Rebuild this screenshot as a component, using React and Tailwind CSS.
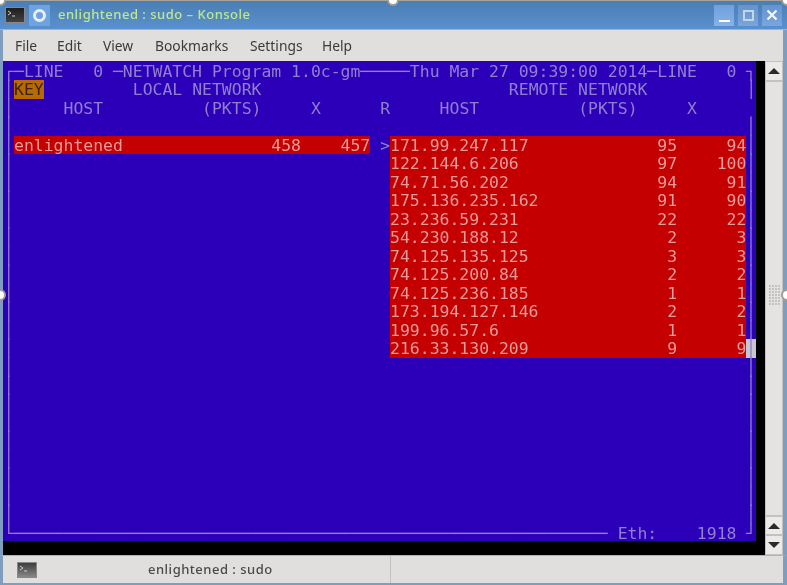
const mono = { fontFamily: '"DejaVu Sans Mono", monospace' };

const remote = [
  ["171.99.247.117", "95", "94"],
  ["122.144.6.206", "97", "100"],
  ["74.71.56.202", "94", "91"],
  ["175.136.235.162", "91", "90"],
  ["23.236.59.231", "22", "22"],
  ["54.230.188.12", "2", "3"],
  ["74.125.135.125", "3", "3"],
  ["74.125.200.84", "2", "2"],
  ["74.125.236.185", "1", "1"],
  ["173.194.127.146", "2", "2"],
  ["199.96.57.6", "1", "1"],
  ["216.33.130.209", "9", "9"],
];

function pad(n) { return " ".repeat(n); }

// One terminal row, written as text with the terminal's real 76 column grid.
function Line({ cells }) {
  let cursor = 0;
  const out = [];
  cells.forEach(([col, text, cls], i) => {
    if (col > cursor) out.push(pad(col - cursor));
    cursor = col + [...text].length;
    out.push(cls ? <span key={i} className={"inline-block h-[18.47px] align-top " + cls}>{text}</span> : text);
  });
  return <div className="h-[18.47px] leading-[20px] whitespace-pre">{out}</div>;
}

const RED = "bg-[#c40000] text-[#e39c9c]";
const L = [0, "│"];
const R = [75, "│"];

function Handle({ className }) {
  return <div className={"absolute w-[12px] h-[12px] rounded-full bg-white border-2 border-[#a09c96] " + className} />;
}

function Arrow({ down }) {
  return (
    <svg width="12" height="6" viewBox="0 0 12 6">
      <path d={down ? "M0 0H12L6 6Z" : "M6 0L12 6H0Z"} fill="#2a2a2a" />
    </svg>
  );
}

function TermIcon({ id, dim }) {
  return (
    <svg width="20" height="16" viewBox="0 0 20 16">
      <defs>
        <linearGradient id={id} x1="0" y1="0" x2="0" y2="1">
          <stop offset="0" stopColor={dim ? "#3a3a3a" : "#1c1c1c"} />
          <stop offset="1" stopColor={dim ? "#8a8a8a" : "#444444"} />
        </linearGradient>
      </defs>
      <rect x="0.5" y="0.5" width="19" height="15" fill={"url(#" + id + ")"} stroke="#888" />
      <path d="M3 4l3 2-3 2" stroke="#ccc" fill="none" />
      <path d="M7 9h3" stroke="#ccc" />
    </svg>
  );
}

export default function App() {
  const rows = [
    [[0, "┌─LINE   0 ─NETWATCH Program 1.0c-gm─────Thu Mar 27 09:39:00 2014─LINE   0 ┐"]],
    [L, [1, "KEY", "bg-[#b86a00] text-[#3a2410]"], [13, "LOCAL NETWORK"], [51, "REMOTE NETWORK"], R],
    [L, [6, "HOST"], [20, "(PKTS)"], [31, "X"], [38, "R"], [44, "HOST"], [58, "(PKTS)"], [69, "X"]],
    [L, R],
    ...remote.map((r, i) => {
      const text = r[0].padEnd(27) + r[1].padStart(2) + r[2].padStart(7);
      const left = i === 0 ? [[1, "enlightened".padEnd(26) + "458" + "457".padStart(7), RED], [38, ">"]] : [];
      const end = i === 11 ? [75, "│", "bg-[#c9c6d2] text-[#8a80c0]"] : R;
      return [L, ...left, [39, text, RED], end];
    }),
    ...Array.from({ length: 9 }, () => [L, R]),
    [[0, "└" + "─".repeat(60)], [62, "Eth:"], [70, "1918"], [75, "┘"]],
  ];

  return (
    <div className="relative w-[787px] h-[585px] overflow-hidden bg-[#e0dfdd] blur-[0.6px] flex flex-col" style={{ fontFamily: '"Noto Sans", sans-serif' }}>
      {/* title bar */}
      <div className="h-[30px] shrink-0 flex items-center pl-[5px] pr-[5px] border-t border-[#a8a49c] border-b border-b-[#9fb4c9] bg-gradient-to-b from-[#4a7eb3] to-[#5a90cf]">
        <TermIcon id="t1" />
        <div className="w-[21px] h-[21px] ml-[4px] mr-[8px] bg-[#6fa3e0] flex items-center justify-center">
          <div className="w-[13px] h-[13px] rounded-full border-[3px] border-[#e8eef5]" />
        </div>
        <span className="text-[13px] font-medium text-[#bfe88a] tracking-[0.5px]">enlightened : sudo – Konsole</span>
        <div className="ml-auto flex gap-[4px]">
          <div className="w-[20px] h-[21px] bg-gradient-to-b from-[#6f9fdc] to-[#86b2e8] flex items-end justify-center pb-[4px]"><div className="w-[11px] h-[2px] bg-white" /></div>
          <div className="w-[20px] h-[21px] bg-gradient-to-b from-[#6493cd] to-[#78a6de] flex items-center justify-center"><div className="w-[11px] h-[11px] border-2 border-[#c8d4e0]" /></div>
          <div className="w-[20px] h-[21px] bg-gradient-to-b from-[#6493cd] to-[#78a6de] flex items-center justify-center">
            <svg width="12" height="12" viewBox="0 0 12 12"><path d="M1.5 1.5l9 9M10.5 1.5l-9 9" stroke="#f4f6f8" strokeWidth="2.2" /></svg>
          </div>
        </div>
      </div>

      {/* menu bar */}
      <div className="h-[31px] shrink-0 flex items-center pl-[12px] pt-[1px] text-[13.8px] text-[#3a3a3a] border-l-[3px] border-r-[4px] border-[#7f9dbe]">
        <span className="w-[42px]">File</span>
        <span className="w-[46px]">Edit</span>
        <span className="w-[52px]">View</span>
        <span className="w-[95px]">Bookmarks</span>
        <span className="w-[72px]">Settings</span>
        <span>Help</span>
      </div>

      {/* middle */}
      <div className="h-[494px] shrink-0 flex">
        <div className="w-[3px] bg-[#7f9dbe]" />
        <div className="w-[762px] bg-black">
          <div className="w-[753px] h-[480px] bg-[#2c00b8] text-[16.445px] text-[#917fd0] pt-[1px] pl-[1.1px]" style={mono}>
            {rows.map((cells, i) => <Line key={i} cells={cells} />)}
          </div>
        </div>
        <div className="w-[18px] flex flex-col">
          <div className="h-[20px] shrink-0 flex items-center justify-center border border-[#c4c2be] bg-[#eceae8]"><Arrow /></div>
          <div className="h-[435px] shrink-0 border border-[#c4c2be] bg-[#e4e3e1] flex items-center justify-center">
            <div className="grid grid-cols-4 gap-[1px] mt-[-8px]">
              {Array.from({ length: 28 }, (_, i) => <div key={i} className="w-[2px] h-[2px] bg-[#c4c2c0]" />)}
            </div>
          </div>
          <div className="h-[19px] shrink-0 flex items-center justify-center border border-[#c4c2be] bg-[#eceae8]"><Arrow /></div>
          <div className="h-[20px] shrink-0 flex items-center justify-center border border-[#c4c2be] bg-[#eceae8]"><Arrow down /></div>
        </div>
        <div className="w-[4px] bg-[#7f9dbe]" />
      </div>

      {/* status bar */}
      <div className="flex-1 flex border-t border-[#b5b3af] border-b-2 border-b-[#7f9dbe] border-l-[3px] border-l-[#7f9dbe] border-r-[4px] border-r-[#7f9dbe]">
        <div className="w-[388px] flex items-center border-r border-[#c4c2be] pl-[14px]">
          <TermIcon id="t2" dim />
          <span className="ml-[111px] text-[13px] font-medium text-[#4a4a4a] tracking-[0.5px]">enlightened : sudo</span>
        </div>
      </div>

      <Handle className="left-[-6px] top-[-6px]" />
      <Handle className="left-[387px] top-[-6px]" />
      <Handle className="left-[781px] top-[-6px]" />
      <Handle className="left-[-6px] top-[289px]" />
      <Handle className="left-[781px] top-[289px]" />
    </div>
  );
}
